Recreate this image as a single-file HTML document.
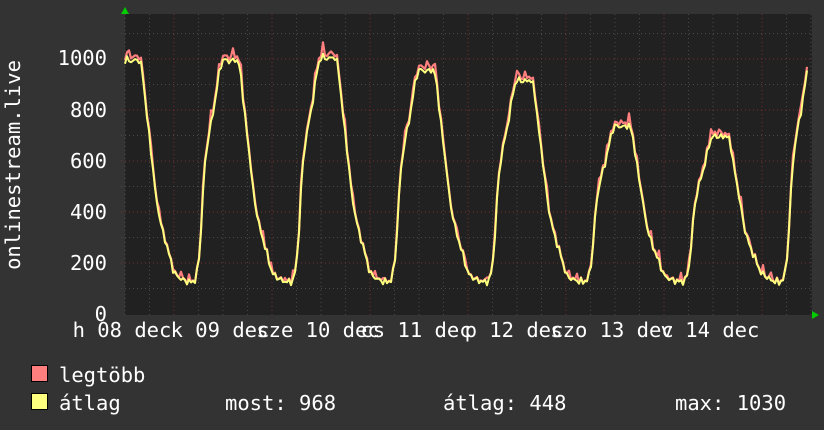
<!DOCTYPE html>
<html><head><meta charset="utf-8"><style>
html,body{margin:0;padding:0;background:#333;}
body{width:824px;height:430px;overflow:hidden;position:relative;font-family:"DejaVu Sans Mono","Liberation Mono",monospace;color:#fff;}
svg{position:absolute;left:0;top:0;}
svg text{font-family:"DejaVu Sans Mono","Liberation Mono",monospace;font-size:20.5px;fill:#fff;}
</style></head><body>
<svg id="g" width="824" height="430" xmlns="http://www.w3.org/2000/svg">
<rect x="0" y="0" width="824" height="430" fill="#333"/>
<rect x="125" y="14" width="687" height="301" fill="#212121"/>
<g id="grid"></g>
<path id="pmax" fill="none" stroke="#ff7f7f" stroke-width="2.2" stroke-linejoin="round"/>
<path id="pavg" fill="none" stroke="#ffff7f" stroke-width="2" stroke-linejoin="round"/>
<polygon points="121,14 129,14 125,7" fill="#00cc00"/>
<polygon points="812,311 812,319 819,315" fill="#00cc00"/>
<text x="107" y="65" text-anchor="end">1000</text>
<text x="107" y="117" text-anchor="end">800</text>
<text x="107" y="168" text-anchor="end">600</text>
<text x="107" y="219" text-anchor="end">400</text>
<text x="107" y="270" text-anchor="end">200</text>
<text x="107" y="321" text-anchor="end">0</text>
<text transform="translate(20,165) rotate(-90)" text-anchor="middle">onlinestream.live</text>
<text x="122" y="337" text-anchor="middle">h 08 dec</text>
<text x="220" y="337" text-anchor="middle">k 09 dec</text>
<text x="318" y="337" text-anchor="middle">sze 10 dec</text>
<text x="416" y="337" text-anchor="middle">cs 11 dec</text>
<text x="514" y="337" text-anchor="middle">p 12 dec</text>
<text x="612" y="337" text-anchor="middle">szo 13 dec</text>
<text x="710" y="337" text-anchor="middle">v 14 dec</text>
<rect x="31.5" y="365.5" width="16" height="16" fill="#ff7f7f" stroke="#000"/>
<rect x="31.5" y="393.5" width="16" height="16" fill="#ffff7f" stroke="#000"/>
<text x="59" y="382">legtöbb</text>
<text x="59" y="410">átlag</text>
<text x="225" y="410">most: 968</text>
<text x="443" y="410">átlag: 448</text>
<text x="675" y="410">max: 1030</text>
</svg>
<script>
(function(){
var g=document.getElementById('grid'),s='';
for(var x=125;x<812;x+=24.5){
 s+='<line x1="'+x+'" y1="14" x2="'+x+'" y2="318" stroke="#4a4a4a" stroke-dasharray="1,3"/>';}
for(var k=0;k<7;k++){var X=174+98*k;s+='<line x1="'+X+'" y1="14" x2="'+X+'" y2="318" stroke="#7a3030" stroke-dasharray="1,3"/>';}
for(var v=100;v<=1100;v+=100){var y=314-v*0.255;var red=(v%200==0);
 s+='<line x1="121" y1="'+y+'" x2="812" y2="'+y+'" stroke="'+(red?'#7a3030':'#4a4a4a')+'" stroke-dasharray="1,3"/>';}
g.innerHTML=s;
var T=[[0,160],[6,140],[12,128],[18,125],[22,135],[26,250],[30,550],[34,680],[40,800],[46,960],[50,990],[56,980],[62,990],[66,960],[70,800],[76,600],[80,450],[86,330],[92,250],[98,160]];
function tv(o){for(var i=0;i<T.length-1;i++){if(o>=T[i][0]&&o<=T[i+1][0]){var f=(o-T[i][0])/(T[i+1][0]-T[i][0]);return T[i][1]+f*(T[i+1][1]-T[i][1]);}}return 160;}
var P={'-1':1000,'0':1000,'1':1010,'2':960,'3':920,'4':740,'5':700,'6':1010};
var a='',m='';
for(var x=125;x<=807;x+=2){var d=Math.floor((x-174)/98);var o=(x-174)-98*d;var pk=P[d];
 var t=tv(o);var v=130+(t-130)*(pk-130)/(990-130);
 v+=Math.sin(x*1.7)*8+Math.sin(x*0.9)*7;
 var sp=Math.sin(x*2.3);
 var mx=v*1.015+(sp>0.8?(sp-0.8)*150:0);
 var ya=314-v*0.255,ym=314-mx*0.255;
 a+=(a?'L':'M')+x+' '+ya.toFixed(1);m+=(m?'L':'M')+x+' '+ym.toFixed(1);}
document.getElementById('pavg').setAttribute('d',a);
document.getElementById('pmax').setAttribute('d',m);
})();
</script>
</body></html>
